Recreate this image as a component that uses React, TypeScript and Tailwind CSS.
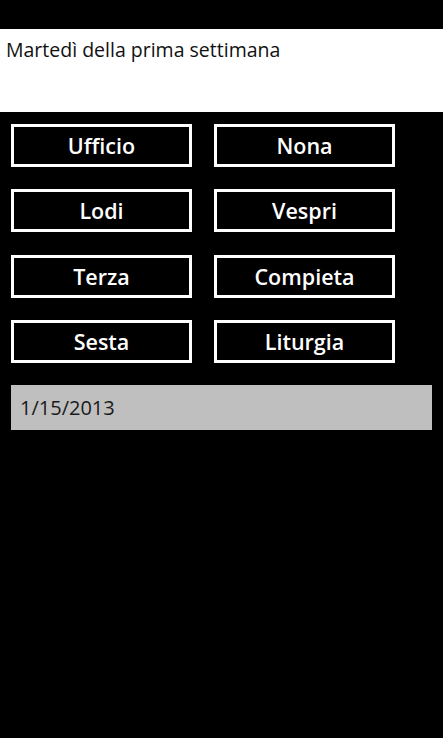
export default function App() {
  const rows = [
    { labels: ['Ufficio', 'Nona'], gap: 'mt-[12px]' },
    { labels: ['Lodi', 'Vespri'], gap: 'mt-[22px]' },
    { labels: ['Terza', 'Compieta'], gap: 'mt-[23px]' },
    { labels: ['Sesta', 'Liturgia'], gap: 'mt-[22px]' },
  ];

  return (
    <div className="min-h-[738px] w-[443px] bg-black font-['Open_Sans',sans-serif] overflow-hidden">
      <div className="h-[29px] bg-black" />
      <div className="h-[83px] bg-white pl-[6px] pt-[8px]">
        <p className="text-[19.5px] leading-[26px] text-[#111]">Martedì della prima settimana</p>
      </div>

      <div className="flex flex-col pl-[11px]">
        {rows.map((row, i) => (
          <div key={i} className={`flex gap-[22px] ${row.gap}`}>
            {row.labels.map((label) => (
              <button
                key={label}
                className="h-[43px] w-[181px] border-[3px] border-white bg-black text-[21.5px] font-semibold leading-none text-white"
              >
                {label}
              </button>
            ))}
          </div>
        ))}

        <div className="mt-[22px] flex h-[45px] w-[421px] items-center bg-[#bfbfbf] pl-[9px]">
          <span className="text-[20px] text-[#1a1a1a]">1/15/2013</span>
        </div>
      </div>
    </div>
  );
}
